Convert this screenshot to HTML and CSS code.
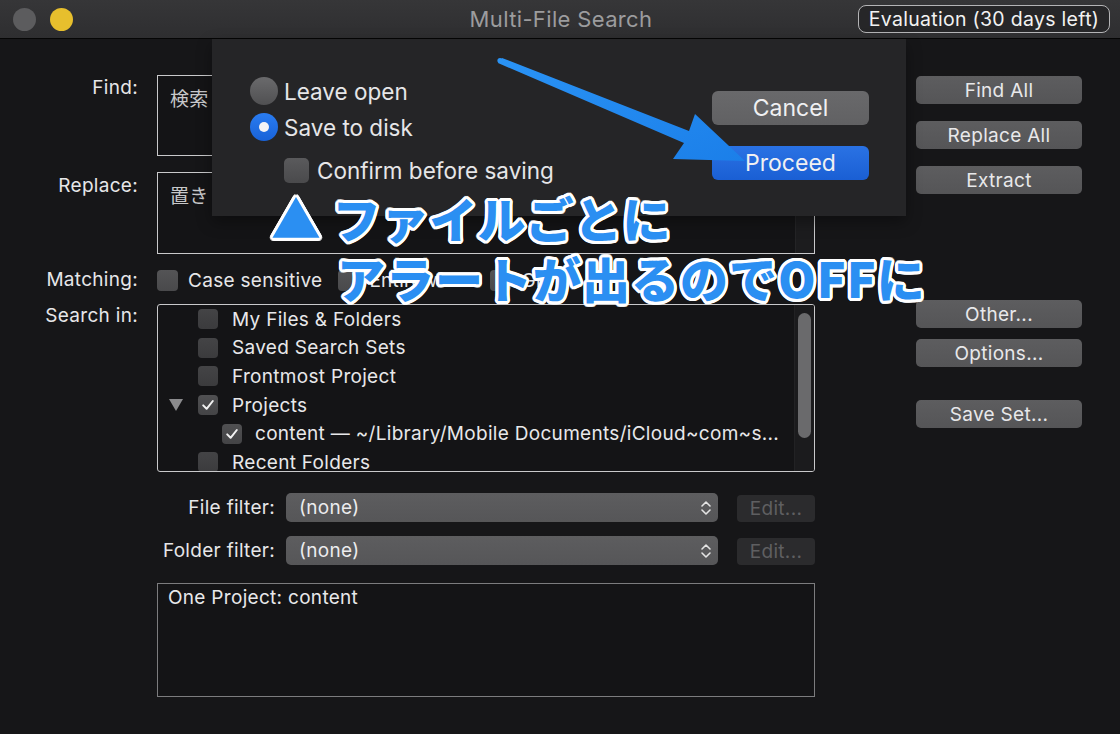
FILE: index.html
```html
<!DOCTYPE html>
<html lang="ja">
<head>
<meta charset="utf-8">
<title>Multi-File Search</title>
<link rel="stylesheet" href="styles.css">
</head>
<body>
<div class="window">
  <header class="titlebar">
    <div class="lights"><span class="light light-gray"></span><span class="light light-yellow"></span></div>
    <div class="title">Multi-File Search</div>
    <div class="badge-wrap"><div class="badge">Evaluation (30 days left)</div></div>
  </header>

  <main class="content">
    <div class="form">
      <div class="row row-find">
        <div class="lbl">Find:</div>
        <div class="textbox"><span class="tb-text">検索</span><div class="tb-track"></div></div>
      </div>
      <div class="row row-replace">
        <div class="lbl">Replace:</div>
        <div class="textbox"><span class="tb-text">置き</span><div class="tb-track"></div></div>
      </div>
      <div class="row row-matching">
        <div class="lbl lbl-mid">Matching:</div>
        <div class="options">
          <span class="opt"><span class="cb"></span>Case sensitive</span>
          <span class="opt opt-entire"><span class="cb"></span>Entire word</span>
          <span class="opt"><span class="cb"></span>Grep</span>
        </div>
      </div>
      <div class="row row-search">
        <div class="lbl">Search in:</div>
        <div class="listbox">
          <ul class="tree">
            <li class="item"><span class="disc"></span><span class="cb cb-sm"></span>My Files &amp; Folders</li>
            <li class="item"><span class="disc"></span><span class="cb cb-sm"></span>Saved Search Sets</li>
            <li class="item"><span class="disc"></span><span class="cb cb-sm"></span>Frontmost Project</li>
            <li class="item"><span class="disc"><svg width="14" height="12" viewBox="0 0 14 12"><polygon points="0,0 14,0 7,12" fill="#8b8b8d"/></svg></span><span class="cb cb-sm cb-on"><svg width="20" height="20" viewBox="0 0 20 20"><path d="M5.2 10.4 L8.6 13.8 L14.8 6" fill="none" stroke="#f2f2f2" stroke-width="2" stroke-linecap="round" stroke-linejoin="round"/></svg></span>Projects</li>
            <li class="item item-sub"><span class="disc"></span><span class="cb cb-sm cb-on"><svg width="20" height="20" viewBox="0 0 20 20"><path d="M5.2 10.4 L8.6 13.8 L14.8 6" fill="none" stroke="#f2f2f2" stroke-width="2" stroke-linecap="round" stroke-linejoin="round"/></svg></span>content — ~/Library/Mobile Documents/iCloud~com~s...</li>
            <li class="item"><span class="disc"></span><span class="cb cb-sm"></span>Recent Folders</li>
          </ul>
          <div class="scroll-track"><div class="scroll-thumb"></div></div>
        </div>
      </div>
      <div class="row row-filter row-file">
        <div class="lbl-empty"></div>
        <div class="filter">
          <div class="flbl">File filter:</div>
          <div class="popup"><span>(none)</span><svg class="chev" width="12" height="18" viewBox="0 0 12 18"><path d="M2 7 L6 3 L10 7 M2 11 L6 15 L10 11" fill="none" stroke="#e4e4e4" stroke-width="1.6" stroke-linecap="round" stroke-linejoin="round"/></svg></div>
          <div class="edit">Edit...</div>
        </div>
      </div>
      <div class="row row-filter row-folder">
        <div class="lbl-empty"></div>
        <div class="filter">
          <div class="flbl">Folder filter:</div>
          <div class="popup"><span>(none)</span><svg class="chev" width="12" height="18" viewBox="0 0 12 18"><path d="M2 7 L6 3 L10 7 M2 11 L6 15 L10 11" fill="none" stroke="#e4e4e4" stroke-width="1.6" stroke-linecap="round" stroke-linejoin="round"/></svg></div>
          <div class="edit">Edit...</div>
        </div>
      </div>
      <div class="row row-summary">
        <div class="lbl-empty"></div>
        <div class="summary">One Project: content</div>
      </div>
    </div>

    <div class="side">
      <div class="btn">Find All</div>
      <div class="btn btn-gap">Replace All</div>
      <div class="btn btn-gap">Extract</div>
      <div class="btn btn-gap-xl">Other...</div>
      <div class="btn btn-gap-sm">Options...</div>
      <div class="btn btn-gap-md">Save Set...</div>
    </div>
  </main>

  <div class="sheet">
    <div class="sheet-opts">
      <div class="radio-row"><span class="radio"></span>Leave open</div>
      <div class="radio-row"><span class="radio radio-on"><span class="radio-dot"></span></span>Save to disk</div>
      <div class="confirm-row"><span class="cb cb-lg"></span>Confirm before saving</div>
    </div>
    <div class="sheet-btns">
      <div class="sbtn">Cancel</div>
      <div class="sbtn sbtn-primary">Proceed</div>
    </div>
  </div>

  <svg class="arrow" width="1120" height="734" viewBox="0 0 1120 734">
    <defs>
      <linearGradient id="ag" x1="0" y1="0" x2="1" y2="1">
        <stop offset="0" stop-color="#2a93f5"/>
        <stop offset="1" stop-color="#1b7fe9"/>
      </linearGradient>
    </defs>
    <polygon points="498,63 684,143 673,159 745,161 695,114 689,131 502,58" fill="url(#ag)"/>
    <circle cx="500" cy="60.5" r="2.6" fill="#2a93f5"/>
  </svg>

  <div class="caption">
    <div class="cap-line"><span class="cap-tri">▲</span> ファイルごとに</div>
    <div class="cap-line cap-line2">アラートが出るのでOFFに</div>
  </div>
</div>
</body>
</html>
```

FILE: styles.css
```css
* { box-sizing: border-box; }
html, body { margin: 0; padding: 0; }
body {
  width: 1120px;
  height: 734px;
  overflow: hidden;
  background: #161618;
  font-family: Inter, Roboto, "Noto Sans CJK JP", sans-serif;
  color: #e4e4e6;
}
.window {
  position: relative;
  width: 1120px;
  height: 734px;
  background: #161618;
  font-size: 19px;
  letter-spacing: 0.3px;
}

/* title bar */
.titlebar {
  height: 39px;
  display: grid;
  grid-template-columns: 1fr auto 1fr;
  align-items: center;
  background: linear-gradient(#363638, #2e2e30);
  border-bottom: 1px solid #050505;
}
.lights { display: flex; gap: 14px; padding-left: 13px; }
.light { width: 23px; height: 23px; border-radius: 50%; display: block; }
.light-gray { background: #5c5c5e; }
.light-yellow { background: #e7bf2d; }
.title {
  font-size: 22px;
  color: #9c9c9e;
  letter-spacing: 0.35px;
  padding-left: 2px;
}
.badge-wrap { display: flex; justify-content: flex-end; padding-right: 10px; }
.badge {
  height: 28px;
  width: 252px;
  border: 1.5px solid #b4b4b6;
  border-radius: 8px;
  background: #262628;
  color: #f2f2f2;
  font-size: 19.5px;
  display: flex;
  align-items: center;
  justify-content: center;
}

/* content */
.content {
  display: flex;
  align-items: flex-start;
  padding-top: 36px;
}
.form { display: flex; flex-direction: column; }
.row {
  display: grid;
  grid-template-columns: 138px 658px;
  column-gap: 19px;
}
.lbl {
  text-align: right;
  line-height: 24px;
  padding-top: 1px;
  color: #e6e6e8;
}
.lbl-mid { display: flex; align-items: center; justify-content: flex-end; padding-top: 0; }

.row-find { height: 81px; }
.row-replace { height: 82px; margin-top: 16px; }
.row-replace .lbl { padding-top: 2px; }
.row-matching { height: 22px; margin-top: 14px; }
.row-search { height: 168px; margin-top: 14px; }
.row-search .lbl { padding-top: 0; }
.row-file { height: 29px; margin-top: 21px; }
.row-folder { height: 29px; margin-top: 14px; }
.row-summary { height: 114px; margin-top: 18px; }

.textbox {
  position: relative;
  border: 1px solid #c9c9cb;
  background: #141416;
  padding: 10px 0 0 12px;
  line-height: 24px;
  color: #c8c8ca;
}
.tb-text { font-family: "Noto Sans CJK JP", sans-serif; font-size: 19px; }
.tb-track {
  position: absolute;
  top: 0;
  right: 0;
  bottom: 0;
  width: 19px;
  background: #1c1c1e;
  border-left: 1px solid #242426;
}

.options {
  display: flex;
  align-items: center;
  color: #e6e6e8;
}
.opt { display: flex; align-items: center; gap: 10px; margin-right: 16px; }
.cb {
  display: inline-flex;
  width: 21px;
  height: 21px;
  border-radius: 4px;
  background: linear-gradient(#545456, #49494b);
  flex: none;
}

.listbox {
  position: relative;
  border: 1px solid #c9c9cb;
  border-radius: 3px;
  background: #141416;
  overflow: hidden;
}
.tree {
  list-style: none;
  margin: 0;
  padding: 0 0 0 10px;
  color: #e8e8ea;
  white-space: nowrap;
}
.item {
  height: 28.6px;
  display: flex;
  align-items: center;
}
.disc {
  width: 30px;
  display: flex;
  align-items: center;
  padding-left: 1px;
}
.cb-sm {
  width: 20px;
  height: 20px;
  margin-right: 14px;
  background: linear-gradient(#444446, #3b3b3d);
}
.cb-on { background: linear-gradient(#505052, #444446); }
.item-sub .cb-sm { margin-left: 24px; margin-right: 13px; }
.scroll-track {
  position: absolute;
  top: 0;
  right: 0;
  bottom: 0;
  width: 20px;
  background: #1b1b1d;
  border-left: 1px solid #222224;
}
.scroll-thumb {
  position: absolute;
  top: 8px;
  left: 3px;
  width: 13px;
  height: 125px;
  border-radius: 7px;
  background: #6a6a6c;
}

.filter { display: flex; align-items: stretch; }
.flbl {
  width: 118px;
  text-align: right;
  color: #e6e6e8;
  display: flex;
  align-items: center;
  justify-content: flex-end;
  white-space: nowrap;
}
.popup {
  width: 432px;
  margin-left: 11px;
  border-radius: 5px;
  background: linear-gradient(#5d5d5f, #565658);
  display: flex;
  align-items: center;
  justify-content: space-between;
  padding: 0 6px 0 13px;
  color: #ececee;
}
.edit {
  width: 78px;
  margin-left: 19px;
  margin-top: 2px;
  border-radius: 4px;
  background: #2b2b2d;
  color: #5f5f61;
  display: flex;
  align-items: center;
  justify-content: center;
}
.summary {
  border: 1px solid #7c7c7e;
  background: #141416;
  padding: 2px 10px;
  line-height: 24px;
  color: #e8e8ea;
}

.side {
  margin-left: 101px;
  margin-top: 1px;
  display: flex;
  flex-direction: column;
  width: 166px;
}
.btn {
  height: 28px;
  border-radius: 5px;
  background: linear-gradient(#5d5d5f, #555557);
  color: #e8e8ea;
  display: flex;
  align-items: center;
  justify-content: center;
}
.btn-gap { margin-top: 17px; }
.btn-gap-xl { margin-top: 106px; }
.btn-gap-sm { margin-top: 11px; }
.btn-gap-md { margin-top: 33px; }

/* sheet */
.sheet {
  position: absolute;
  left: 212px;
  top: 39px;
  width: 694px;
  height: 177px;
  background: #252527;
  display: flex;
  justify-content: space-between;
  padding: 34px 37px 0 38px;
  box-shadow: 0 6px 14px rgba(0,0,0,0.35);
  letter-spacing: 0;
}
.sheet-opts {
  display: flex;
  flex-direction: column;
  font-size: 22.5px;
  color: #e6e6e8;
}
.radio-row {
  height: 36px;
  display: flex;
  align-items: center;
  gap: 6px;
}
.radio {
  width: 28px;
  height: 28px;
  border-radius: 50%;
  background: linear-gradient(#6a6a6c, #505052);
  display: flex;
  align-items: center;
  justify-content: center;
}
.radio-on { background: linear-gradient(#2a7cf0, #1862d8); }
.radio-dot { width: 10px; height: 10px; border-radius: 50%; background: #f4f4f6; }
.confirm-row {
  margin-top: 12px;
  height: 26px;
  display: flex;
  align-items: center;
  gap: 8px;
  padding-left: 34px;
}
.cb-lg { width: 25px; height: 25px; border-radius: 5px; background: linear-gradient(#5a5a5c, #4a4a4c); }
.sheet-btns {
  display: flex;
  flex-direction: column;
  padding-top: 18px;
}
.sbtn {
  width: 157px;
  height: 34px;
  border-radius: 6px;
  background: linear-gradient(#69696b, #616163);
  color: #f0f0f2;
  font-size: 23px;
  display: flex;
  align-items: center;
  justify-content: center;
}
.sbtn-primary {
  margin-top: 21px;
  background: linear-gradient(#2a72e4, #1a5fd4);
}

/* annotation */
.arrow {
  position: absolute;
  left: 0;
  top: 0;
  pointer-events: none;
}
.caption {
  position: absolute;
  left: 271px;
  top: 186px;
  font-family: "Noto Sans CJK JP", sans-serif;
  font-weight: 900;
  font-size: 48px;
  line-height: 60px;
  letter-spacing: 0.3px;
  color: #2b8ff2;
  white-space: nowrap;
  text-shadow:
    3px 0 0 #fff, -3px 0 0 #fff, 0 3px 0 #fff, 0 -3px 0 #fff,
    2.2px 2.2px 0 #fff, -2.2px 2.2px 0 #fff, 2.2px -2.2px 0 #fff, -2.2px -2.2px 0 #fff,
    1.2px 2.8px 0 #fff, -1.2px 2.8px 0 #fff, 1.2px -2.8px 0 #fff, -1.2px -2.8px 0 #fff,
    2.8px 1.2px 0 #fff, -2.8px 1.2px 0 #fff, 2.8px -1.2px 0 #fff, -2.8px -1.2px 0 #fff;
}
.cap-line2 { padding-left: 66px; letter-spacing: 1px; }
.cap-tri { font-size: 50px; }
```
